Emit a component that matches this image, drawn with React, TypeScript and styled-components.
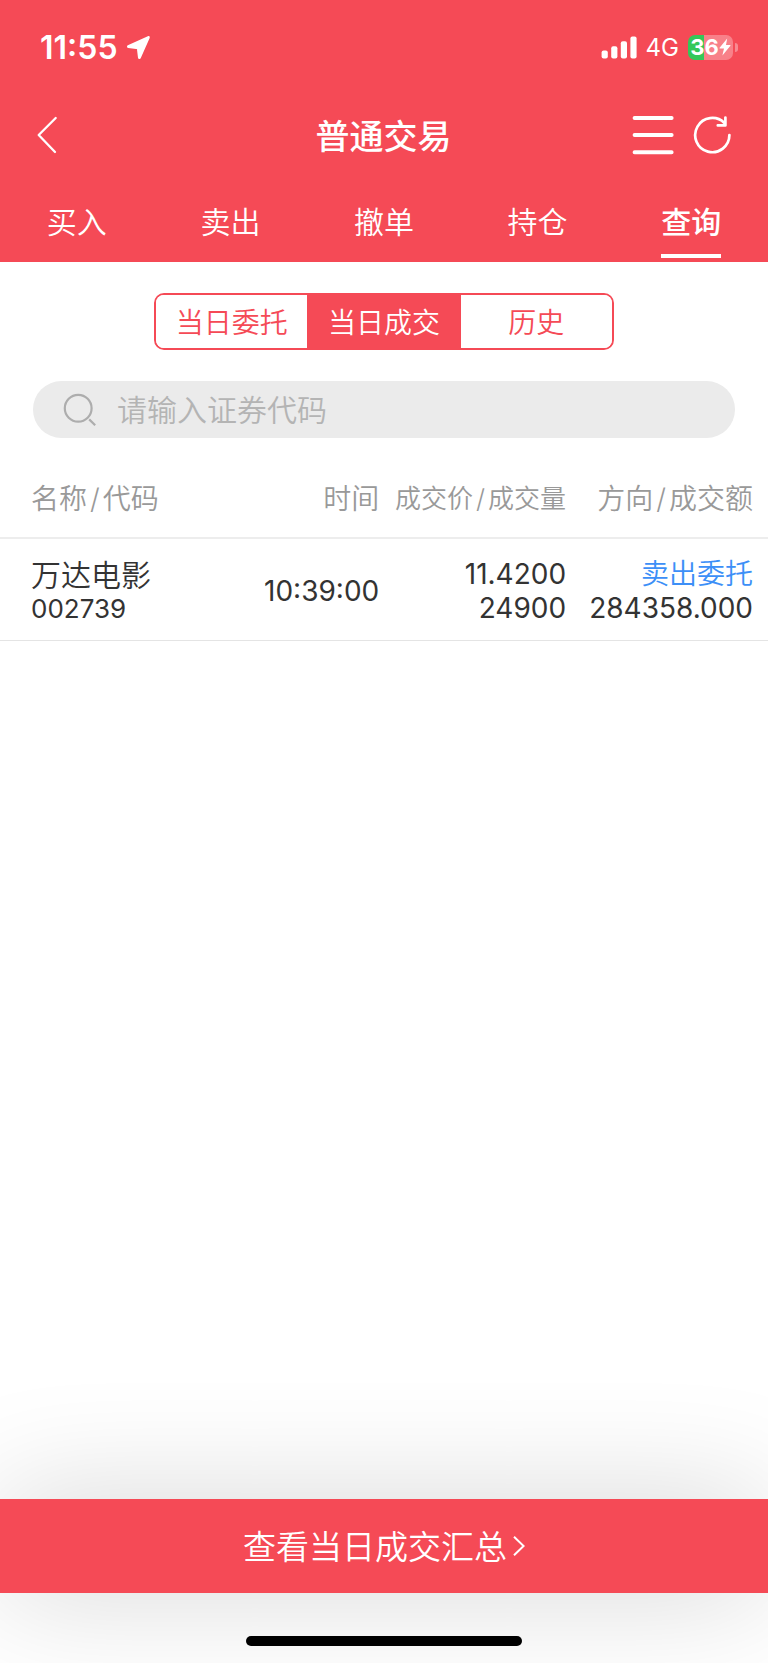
import React, { useState } from "react";
import styled, { createGlobalStyle } from "styled-components";

const RED = "#f54a56";

const GlobalStyle = createGlobalStyle`
  *, *::before, *::after { box-sizing: border-box; }
  body {
    margin: 0;
    background: #fff;
    color: #333;
    font-family: Inter, "Noto Sans CJK SC", sans-serif;
  }
  button, input { font-family: inherit; margin: 0; }
  button { border: 0; padding: 0; background: none; color: inherit; cursor: pointer; }
`;

const Page = styled.div`
  min-height: 100vh;
  display: flex;
  flex-direction: column;
`;

const Header = styled.header`
  background: ${RED};
  color: #fff;
`;

const StatusBar = styled.div`
  height: 94px;
  padding: 0 30px 0 40px;
  display: flex;
  align-items: center;
  justify-content: space-between;
`;

const StatusGroup = styled.div<{ $gap: number }>`
  display: flex;
  align-items: center;
  gap: ${(p) => p.$gap}px;
`;

const Clock = styled.time`
  padding-top: 1px;
  font-size: 32px;
  line-height: 36px;
  font-weight: 600;
`;

const Network = styled.span`
  padding-top: 2px;
  font-size: 24px;
  line-height: 30px;
`;

const Battery = styled.div`
  display: flex;
  align-items: center;
  gap: 2px;
`;

const BatteryBody = styled.div`
  width: 45px;
  height: 25px;
  border-radius: 7px;
  background: linear-gradient(to right, #34c759 36%, rgba(255, 255, 255, 0.3) 36%);
  display: flex;
  align-items: center;
  justify-content: center;
  font-size: 22px;
  line-height: 25px;
  font-weight: 700;
`;

const BatteryTip = styled.div`
  width: 3px;
  height: 9px;
  border-radius: 0 3px 3px 0;
  background: rgba(255, 255, 255, 0.35);
`;

const NavBar = styled.div`
  height: 84px;
  padding: 0 37px 2px 36px;
  display: grid;
  grid-template-columns: 1fr auto 1fr;
  align-items: center;
`;

const Title = styled.h1`
  margin: 0;
  padding-top: 4px;
  font-size: 34px;
  line-height: 48px;
  font-weight: 500;
`;

const NavActions = styled.div`
  display: flex;
  justify-content: flex-end;
  gap: 19px;
`;

const IconButton = styled.button`
  display: flex;
  justify-self: start;
`;

const Tabs = styled.nav`
  height: 84px;
  display: flex;
`;

const Tab = styled.button<{ $active: boolean }>`
  flex: 1;
  display: flex;
  flex-direction: column;
  align-items: center;
  justify-content: flex-end;
  gap: 10px;
  padding-bottom: 4px;
  font-size: 30px;
  line-height: 44px;
  font-weight: ${(p) => (p.$active ? 500 : 350)};

  &::after {
    content: "";
    width: 60px;
    height: 4px;
    background: ${(p) => (p.$active ? "#fff" : "transparent")};
  }
`;

const Main = styled.main`
  flex: 1;
`;

const Segments = styled.div`
  width: 60%;
  height: 57px;
  margin: 31px auto;
  display: grid;
  grid-template-columns: repeat(3, 1fr);
  border: 2px solid ${RED};
  border-radius: 10px;
  overflow: hidden;
`;

const Segment = styled.button<{ $active: boolean }>`
  position: relative;
  z-index: ${(p) => (p.$active ? 1 : 0)};
  padding-top: 2px;
  font-size: 28px;
  line-height: 40px;
  font-weight: 350;
  color: ${(p) => (p.$active ? "#fff" : RED)};
  background: ${(p) => (p.$active ? RED : "#fff")};
  box-shadow: ${(p) => (p.$active ? `0 0 0 1px ${RED}` : "none")};
`;

const SearchBox = styled.label`
  height: 57px;
  margin: 0 33px;
  padding: 0 30px;
  display: flex;
  align-items: center;
  gap: 20px;
  border-radius: 29px;
  background: #ebebeb;
`;

const SearchInput = styled.input`
  flex: 1;
  min-width: 0;
  border: 0;
  padding: 0;
  outline: none;
  background: transparent;
  font-size: 30px;
  line-height: 44px;
  font-weight: 350;
  color: #333;

  &::placeholder { color: #b4b4b4; opacity: 1; }
`;

const Deals = styled.table`
  width: 100%;
  margin-top: 20px;
  table-layout: fixed;
  border-collapse: separate;
  border-spacing: 0;
`;

const HeadCell = styled.th<{ $small?: boolean }>`
  height: 81px;
  padding: 2px 15px 0 0;
  border-bottom: 2px solid #ededed;
  text-align: right;
  white-space: nowrap;
  font-size: ${(p) => (p.$small ? 26 : 28)}px;
  line-height: 40px;
  font-weight: 350;
  color: #999;

  &:first-child { width: 27%; padding-left: 31px; text-align: left; }
`;

const Slash = styled.span`
  margin: 0 3px;
`;

const Cell = styled.td`
  height: 102px;
  padding: 2px 15px 0 0;
  border-bottom: 1px solid #e4e4e4;
  text-align: right;
  white-space: nowrap;
  font-size: 28px;
  line-height: 34px;

  &:first-child { padding-top: 4px; padding-left: 31px; text-align: left; }
`;

const Line = styled.div<{ $kind?: "name" | "code" | "side" }>`
  height: 34px;
  font-size: ${(p) => (p.$kind === "name" ? 30 : p.$kind === "code" ? 26 : 28)}px;
  font-weight: ${(p) => (p.$kind === "name" || p.$kind === "side" ? 350 : 400)};
  color: ${(p) => (p.$kind === "side" ? "#3c8ff7" : "#333")};
`;

const SummaryButton = styled.button`
  width: 100%;
  height: 94px;
  padding-top: 2px;
  display: flex;
  align-items: center;
  justify-content: center;
  gap: 6px;
  background: ${RED};
  color: #fff;
  font-size: 33px;
  line-height: 48px;
  font-weight: 350;
  box-shadow: 0 0 120px rgba(0, 0, 0, 0.17);
`;

const HomeArea = styled.footer`
  height: 70px;
  padding-bottom: 17px;
  display: flex;
  align-items: flex-end;
  justify-content: center;
`;

const HomeIndicator = styled.div`
  width: 36%;
  height: 10px;
  border-radius: 5px;
  background: #000;
`;

const LocationIcon = () => (
  <svg width="25" height="25" viewBox="0 0 25 25" fill="#fff" stroke="#fff" strokeWidth="2.8" strokeLinejoin="round">
    <path d="M22.4 2.4 2.4 11.6 12.2 12.8 13.4 22.6Z" />
  </svg>
);

const SignalIcon = () => (
  <svg width="36" height="23" viewBox="0 0 36 23" fill="#fff">
    <rect x="0.6" y="14.5" width="6.2" height="8" rx="2" />
    <rect x="10.2" y="10.3" width="6.2" height="12.2" rx="2" />
    <rect x="19.8" y="5.3" width="6.2" height="17.2" rx="2" />
    <rect x="29.4" y="0.5" width="6.2" height="22" rx="2" />
  </svg>
);

const BoltIcon = () => (
  <svg width="12" height="18" viewBox="0 0 12 18" fill="#fff">
    <path d="M8.2 0.5 0.6 9.8a.5.5 0 0 0 .4.8H5L3.4 17.5 11.4 7.8a.5.5 0 0 0-.4-.8H7Z" />
  </svg>
);

const BackIcon = () => (
  <svg width="22" height="38" viewBox="0 0 22 38" fill="none" stroke="#fff" strokeWidth="2.3" strokeLinecap="round" strokeLinejoin="round">
    <path d="M19.7 2 2.7 19 19 36" />
  </svg>
);

const MenuIcon = () => (
  <svg width="42" height="40" viewBox="0 0 42 40" stroke="#fff" strokeWidth="4" strokeLinecap="round">
    <path d="M2.6 3H39.6M2.6 20H39.6M2.6 37.2H39.6" />
  </svg>
);

const RefreshIcon = () => (
  <svg width="38" height="40" viewBox="0 0 38 40" fill="none" stroke="#fff" strokeWidth="2.7" strokeLinecap="round" strokeLinejoin="round">
    <path d="M36.4 20A17.1 17.1 0 1 1 31.4 8L32.4 10M32.4 2.6V10.4H24.8" />
  </svg>
);

const SearchIcon = () => (
  <svg width="34" height="34" viewBox="0 0 34 34" fill="none" stroke="#adadad" strokeWidth="2.2">
    <circle cx="15.2" cy="15.2" r="13.4" />
    <path d="M26.2 26.4 32.2 32.2" />
  </svg>
);

const ArrowIcon = () => (
  <svg width="12" height="22" viewBox="0 0 12 22" fill="none" stroke="#fff" strokeWidth="2">
    <path d="M1 0.8 10.6 10 1 19.2" />
  </svg>
);

const TABS = ["买入", "卖出", "撤单", "持仓", "查询"];
const SEGMENTS = ["当日委托", "当日成交", "历史"];

interface Deal {
  name: string;
  code: string;
  time: string;
  price: string;
  volume: string;
  side: string;
  amount: string;
}

const DEALS: Deal[] = [
  { name: "万达电影", code: "002739", time: "10:39:00", price: "11.4200", volume: "24900", side: "卖出委托", amount: "284358.000" },
];

export default function App() {
  const [tab, setTab] = useState("查询");
  const [segment, setSegment] = useState("当日成交");

  return (
    <Page>
      <GlobalStyle />
      <Header>
        <StatusBar>
          <StatusGroup $gap={8}>
            <Clock>11:55</Clock>
            <LocationIcon />
          </StatusGroup>
          <StatusGroup $gap={9}>
            <SignalIcon />
            <Network>4G</Network>
            <Battery>
              <BatteryBody>
                36
                <BoltIcon />
              </BatteryBody>
              <BatteryTip />
            </Battery>
          </StatusGroup>
        </StatusBar>
        <NavBar>
          <IconButton aria-label="返回">
            <BackIcon />
          </IconButton>
          <Title>普通交易</Title>
          <NavActions>
            <IconButton aria-label="菜单">
              <MenuIcon />
            </IconButton>
            <IconButton aria-label="刷新">
              <RefreshIcon />
            </IconButton>
          </NavActions>
        </NavBar>
        <Tabs>
          {TABS.map((t) => (
            <Tab key={t} $active={t === tab} onClick={() => setTab(t)}>
              {t}
            </Tab>
          ))}
        </Tabs>
      </Header>

      <Main>
        <Segments>
          {SEGMENTS.map((s) => (
            <Segment key={s} $active={s === segment} aria-pressed={s === segment} onClick={() => setSegment(s)}>
              {s}
            </Segment>
          ))}
        </Segments>
        <SearchBox>
          <SearchIcon />
          <SearchInput type="text" placeholder="请输入证券代码" aria-label="证券代码" />
        </SearchBox>
        <Deals>
          <thead>
            <tr>
              <HeadCell scope="col">名称<Slash>/</Slash>代码</HeadCell>
              <HeadCell scope="col">时间</HeadCell>
              <HeadCell scope="col" $small>成交价<Slash>/</Slash>成交量</HeadCell>
              <HeadCell scope="col">方向<Slash>/</Slash>成交额</HeadCell>
            </tr>
          </thead>
          <tbody>
            {DEALS.map((d) => (
              <tr key={d.code}>
                <Cell>
                  <Line $kind="name">{d.name}</Line>
                  <Line $kind="code">{d.code}</Line>
                </Cell>
                <Cell>{d.time}</Cell>
                <Cell>
                  <Line>{d.price}</Line>
                  <Line>{d.volume}</Line>
                </Cell>
                <Cell>
                  <Line $kind="side">{d.side}</Line>
                  <Line>{d.amount}</Line>
                </Cell>
              </tr>
            ))}
          </tbody>
        </Deals>
      </Main>

      <SummaryButton>
        查看当日成交汇总
        <ArrowIcon />
      </SummaryButton>
      <HomeArea>
        <HomeIndicator />
      </HomeArea>
    </Page>
  );
}
